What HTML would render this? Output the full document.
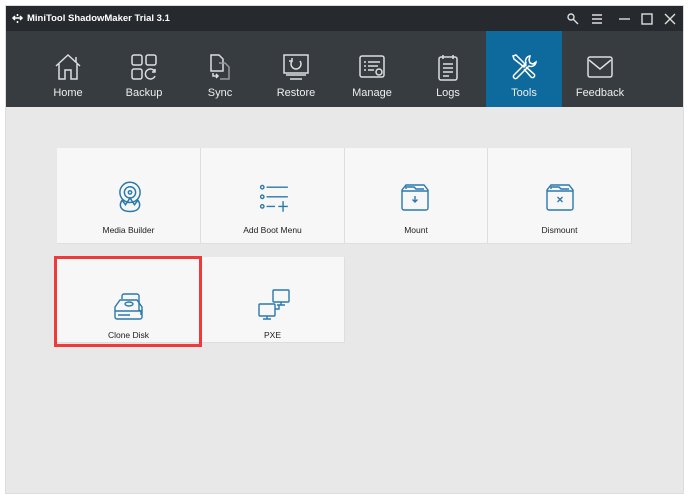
<!DOCTYPE html>
<html><head><style>
*{margin:0;padding:0;box-sizing:border-box}
body{width:688px;height:498px;background:#fff;font-family:"Liberation Sans",Arial,sans-serif;position:relative;overflow:hidden}
#win{position:absolute;left:5px;top:5px;width:679px;height:489px;background:#e8e8e8;border:1px solid #ddd}
#title{position:absolute;left:0;top:0;width:100%;height:25px;background:#262a2e;color:#fff;font-size:9.5px;font-weight:bold}
#nav{position:absolute;left:0;top:25px;width:100%;height:76px;background:#363c40}
.ni{position:absolute;top:0;width:76px;height:76px;color:#eee;font-size:11px;text-align:center}
.ni svg{position:absolute;left:24px;top:22px}
.ni span{position:absolute;left:0;width:100%;top:56px}
.tile{position:absolute;background:#f7f7f7;border-right:1px solid #dedede;border-bottom:1px solid #dedede;font-size:8.5px;color:#222;text-align:center}
.tile span{position:absolute;left:0;width:100%}
.tile svg{position:absolute}
</style></head><body>
<div id="win">
<div id="title">
<svg style="position:absolute;left:5px;top:6px" width="13" height="13" viewBox="0 0 13 13" fill="none" stroke="#fff" stroke-width="1.5"><path d="M2 6h9M4 4L2 6l2 2M9 4l2 2-2 2M6.5 2v2M6.5 9v2"/></svg>
<span style="position:absolute;left:21px;top:7px">MiniTool ShadowMaker Trial 3.1</span>
<svg style="position:absolute;left:560px;top:6px" width="112" height="14" viewBox="0 0 112 14" fill="none" stroke="#ddd" stroke-width="1.4"><circle cx="5" cy="5" r="3"/><path d="M7 7l5 5"/><path d="M26 3h10M26 7h10M26 11h10"/><path d="M53 7h11"/><rect x="76" y="2" width="10" height="10"/><path d="M99 2l10 10M109 2L99 12"/></svg>
</div>
<div id="nav">
<div class="ni" style="left:24px"><svg width="28" height="28" viewBox="0 0 28 28" fill="none" stroke="#ddd" stroke-width="1.5"><path d="M2 13L14 2l12 11M5 11v15h6v-9h6v9h6V11M22 4v5"/></svg><span>Home</span></div>
<div class="ni" style="left:100px"><svg width="28" height="28" viewBox="0 0 28 28" fill="none" stroke="#ddd" stroke-width="1.5"><rect x="2" y="2" width="10" height="10" rx="2"/><rect x="16" y="2" width="10" height="10" rx="2"/><rect x="2" y="16" width="10" height="10" rx="2"/><path d="M25 19a5 5 0 1 0 0 4M25 16v3h-3"/></svg><span>Backup</span></div>
<div class="ni" style="left:176px"><svg width="28" height="28" viewBox="0 0 28 28" fill="none" stroke="#ddd" stroke-width="1.5"><path d="M5 2h8l4 4v12H5z"/><path d="M13 10h6l4 4v12h-9" stroke="#999"/><path d="M7 20v3h5M10 21l2 2-2 2"/></svg><span>Sync</span></div>
<div class="ni" style="left:252px"><svg width="28" height="28" viewBox="0 0 28 28" fill="none" stroke="#ddd" stroke-width="1.5"><rect x="2" y="2" width="24" height="18"/><path d="M8 26h12M4 22h20"/><path d="M18 8a5 5 0 1 1-8 0M10 5v3h-3"/></svg><span>Restore</span></div>
<div class="ni" style="left:328px"><svg width="28" height="28" viewBox="0 0 28 28" fill="none" stroke="#ddd" stroke-width="1.5"><rect x="2" y="3" width="24" height="21" rx="2"/><path d="M6 9h2M10 9h12M6 13h2M10 13h10M6 17h2M10 17h6"/><circle cx="21" cy="19" r="3"/></svg><span>Manage</span></div>
<div class="ni" style="left:404px"><svg width="28" height="28" viewBox="0 0 28 28" fill="none" stroke="#ddd" stroke-width="1.5"><rect x="5" y="4" width="18" height="23" rx="2"/><path d="M9 2v4M19 2v4M9 11h10M9 15h10M9 19h10M9 23h6"/></svg><span>Logs</span></div>
<div class="ni" style="left:480px;background:#0e6a9c;width:76px"><svg width="28" height="28" viewBox="0 0 28 28" fill="none" stroke="#fff" stroke-width="1.5"><path d="M3 3l3-1 10 10-2 2L4 6zM14 16l7 8a2 2 0 0 0 3-3l-8-7"/><path d="M20 3a5 5 0 0 0-4 7L4 22a2 2 0 0 0 3 3l12-12a5 5 0 0 0 7-4l-3 2-3-1-1-3z"/></svg><span>Tools</span></div>
<div class="ni" style="left:556px"><svg width="28" height="28" viewBox="0 0 28 28" fill="none" stroke="#ddd" stroke-width="1.5"><rect x="2" y="4" width="24" height="20" rx="2"/><path d="M3 7l11 9 11-9"/></svg><span>Feedback</span></div>
</div>
<div class="tile" style="left:51px;top:142px;width:144px;height:96px"><svg style="left:56px;top:32px" width="34" height="36" viewBox="0 0 30 32" fill="none" stroke="#2a79ab" stroke-width="1.3"><circle cx="15" cy="11" r="9"/><circle cx="15" cy="11" r="5"/><circle cx="15" cy="11" r="1.5"/><path d="M8 18c-3 4-2 10 7 10s10-6 7-10l-3 4-4-6-4 6z"/></svg><span style="top:77px">Media Builder</span></div>
<div class="tile" style="left:195px;top:142px;width:144px;height:96px"><svg style="left:57px;top:36px" width="32" height="32" viewBox="0 0 30 30" fill="none" stroke="#2a79ab" stroke-width="1.3"><circle cx="4" cy="3" r="1.6"/><circle cx="4" cy="12" r="1.6"/><circle cx="4" cy="21" r="1.6"/><path d="M8 3h20M8 12h20M8 21h8M19 21h9M23.5 16v10"/></svg><span style="top:77px">Add Boot Menu</span></div>
<div class="tile" style="left:339px;top:142px;width:143px;height:96px"><svg style="left:56px;top:36px" width="28" height="28" viewBox="0 0 28 28" fill="none" stroke="#2a79ab" stroke-width="1.4"><path d="M5 1h18l4 5v18a2 2 0 0 1-2 2H3a2 2 0 0 1-2-2V6z"/><path d="M1 7h26M5 5V3h8l2 2h8"/><path d="M14 12v6M11.5 15.5l2.5 2.5 2.5-2.5"/></svg><span style="top:77px">Mount</span></div>
<div class="tile" style="left:482px;top:142px;width:144px;height:96px"><svg style="left:58px;top:36px" width="28" height="28" viewBox="0 0 28 28" fill="none" stroke="#2a79ab" stroke-width="1.4"><path d="M5 1h18l4 5v18a2 2 0 0 1-2 2H3a2 2 0 0 1-2-2V6z"/><path d="M1 7h26M5 5V3h8l2 2h8"/><path d="M11.5 13l5 5M16.5 13l-5 5"/></svg><span style="top:77px">Dismount</span></div>
<div class="tile" style="left:51px;top:251px;width:144px;height:86px"><svg style="left:55px;top:36px" width="34" height="28" viewBox="0 0 34 28" fill="none" stroke="#2a79ab" stroke-width="1.4"><path d="M10 6V3a2 2 0 0 1 2-2h13a2 2 0 0 1 2 2v14a3 3 0 0 1 2 3v2"/><path d="M3 14l5-7h17l5 7v10a2 2 0 0 1-2 2H5a2 2 0 0 1-2-2z"/><path d="M3 18h27M6 22h12"/><ellipse cx="17" cy="11" rx="4" ry="2"/></svg><span style="top:73px">Clone Disk</span></div>
<div class="tile" style="left:195px;top:251px;width:144px;height:86px"><svg style="left:56px;top:32px" width="34" height="32" viewBox="0 0 34 32" fill="none" stroke="#2a79ab" stroke-width="1.4"><rect x="16" y="1" width="16" height="12" rx="1"/><path d="M24 13v3M20 16h8"/><rect x="2" y="15" width="16" height="12" rx="1"/><path d="M10 27v3M6 30h8M18 20h4v-4"/></svg><span style="top:73px">PXE</span></div>
<div style="position:absolute;left:48px;top:250px;width:148px;height:91px;border:3px solid #f03a3a"></div>
</div>
</body></html>
